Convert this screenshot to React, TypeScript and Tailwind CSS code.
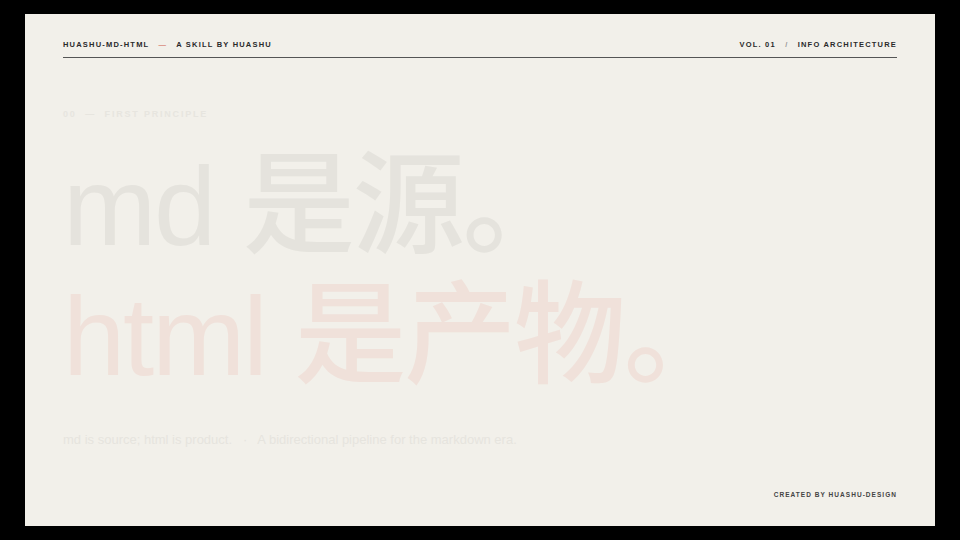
export default function App() {
  return (
    <div className="w-[960px] h-[540px] bg-black px-[25px] pt-[14px] pb-[14px]" style={{ fontFamily: '"Liberation Sans", "Noto Sans CJK SC", sans-serif' }}>
      <div className="w-[910px] h-[512px] bg-[#f2f0ea] px-[38px] pt-[25px] flex flex-col">
        <div className="flex justify-between items-center h-[12px] text-[7.5px] font-bold tracking-[0.16em] text-[#2a2a2a]">
          <div>HUASHU-MD-HTML <span className="text-[#d98a7e] mx-[6px]">—</span> A SKILL BY HUASHU</div>
          <div>VOL. 01 <span className="text-[#999] mx-[6px]">/</span> INFO ARCHITECTURE</div>
        </div>
        <div className="mt-[6px] h-px bg-[#555]" />
        <div className="mt-[50px] text-[9px] font-bold tracking-[0.2em] text-[#e7e5df]">00 &nbsp;— &nbsp;FIRST PRINCIPLE</div>
        <div className="mt-[20px] text-[112px] leading-[130px] font-medium tracking-[-0.02em]">
          <div className="text-[#e5e3dd]">md 是源。</div>
          <div className="text-[#f0e1da]">html 是产物。</div>
        </div>
        <div className="mt-[28px] text-[13px] text-[#e6e4de]">md is source; html is product. &nbsp; · &nbsp; A bidirectional pipeline for the markdown era.</div>
        <div className="mt-auto mb-[26px] text-right text-[6.5px] font-bold tracking-[0.16em] text-[#444]">CREATED BY HUASHU-DESIGN</div>
      </div>
    </div>
  );
}
